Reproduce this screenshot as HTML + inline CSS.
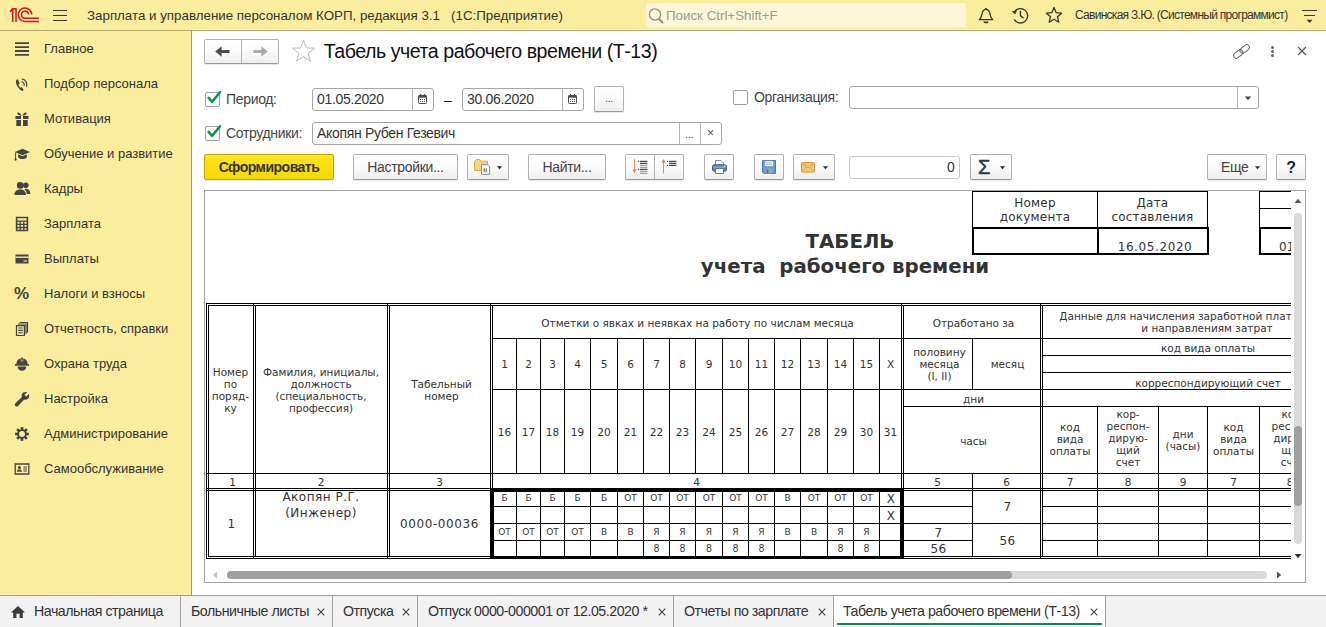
<!DOCTYPE html>
<html lang="ru"><head><meta charset="utf-8"><title>Табель учета рабочего времени (Т-13)</title>
<style>
*{box-sizing:border-box;margin:0;padding:0}
html,body{width:1326px;height:627px;overflow:hidden;background:#fff}
body{position:relative;font-family:"Liberation Sans",Arial,sans-serif;font-size:13.33px;color:#333;-webkit-font-smoothing:antialiased}
.abs{position:absolute}
.t{position:absolute;white-space:pre;line-height:1}
#topbar{position:absolute;left:0;top:0;width:1326px;height:30px;background:#fbed9e}
#topline{position:absolute;left:0;top:30px;width:1326px;height:1px;background:#b3a872}
#side{position:absolute;left:0;top:31px;width:191px;height:564px;background:#fbed9e}
#sideline{position:absolute;left:191px;top:31px;width:1px;height:564px;background:#a79c64}
.si{position:absolute;left:44px;font-size:13px;color:#333;white-space:pre;line-height:15px}
#tabbar{position:absolute;left:0;top:595px;width:1326px;height:32px;background:#f2f2f2;border-top:1px solid #9e9e9e}
.tab{position:absolute;top:596px;height:31px;font-size:14.2px;letter-spacing:-0.47px;color:#333;white-space:pre;line-height:31px}
.tsep{position:absolute;top:596px;width:1px;height:31px;background:#a3a3a3}
.btn{position:absolute;border:1px solid #b2b2b2;border-bottom-color:#9a9a9a;border-radius:2px;background:linear-gradient(#ffffff 0%,#fbfbfb 50%,#eeeeee 100%);box-shadow:0 1px 1px rgba(0,0,0,.10);font-size:14px;letter-spacing:-0.33px;color:#444;text-align:center;white-space:pre}
.inp{position:absolute;border:1px solid #a6a6a6;border-radius:3px;background:#fff}
.vsep{position:absolute;width:1px;background:#b4b4b4}
.cb{position:absolute;width:15px;height:15px;border:1px solid #a0a0a0;border-radius:2px;background:#fff}
.lbl{position:absolute;font-size:14px;letter-spacing:-0.33px;color:#444;white-space:pre;line-height:15px}
.sheet{position:absolute;left:205px;top:191px;width:1086px;height:368px;overflow:hidden;font-family:"DejaVu Sans",Verdana,sans-serif;color:#222}
.ln{position:absolute;background:#000}
.c{position:absolute;display:flex;align-items:center;justify-content:center;text-align:center;font-size:10.5px;line-height:12px;color:#333;white-space:pre}
</style></head>
<body>
<div id="topbar"></div><div id="topline"></div>
<svg class="abs" style="left:9px;top:7px" width="32" height="16" viewBox="0 0 32 16">
<g fill="none" stroke="#d8141c" stroke-width="1.5">
<path d="M3.7 15 V1.7 H7 V15"/><path d="M3.9 2 L1 4.6" stroke-width="1.8"/>
<path d="M19.5 7.5 A3.5 3.5 0 1 0 16 11.2 H30"/>
<path d="M22.7 7.5 A6.7 6.7 0 1 0 16 14.4 H30"/>
</g></svg>
<div class="abs" style="left:53px;top:10px;width:14px;height:1.4px;background:#3a3a3a"></div>
<div class="abs" style="left:53px;top:15px;width:14px;height:1.4px;background:#3a3a3a"></div>
<div class="abs" style="left:53px;top:20px;width:14px;height:1.4px;background:#3a3a3a"></div>
<div class="t" style="left:87px;top:8px;font-size:13.33px;line-height:15px;color:#333">Зарплата и управление персоналом КОРП, редакция 3.1   (1С:Предприятие)</div>
<div class="abs" style="left:646px;top:3px;width:320px;height:24px;background:#fdf6d7;border-radius:2px"></div>
<svg class="abs" style="left:648px;top:7px" width="17" height="17" viewBox="0 0 17 17"><circle cx="7" cy="7.5" r="5.6" fill="none" stroke="#8c8c8c" stroke-width="1.3"/><path d="M11 12 L14.5 15.5" stroke="#8c8c8c" stroke-width="1.8" stroke-linecap="round"/></svg>
<div class="t" style="left:666px;top:8px;font-size:13.33px;line-height:15px;color:#9b9b9b">Поиск Ctrl+Shift+F</div>
<svg class="abs" style="left:977px;top:7px" width="18" height="18" viewBox="0 0 18 18"><path d="M2.3 12.7 H15.7 C13.9 11 13.4 9.4 12.9 6.6 C12.4 3.7 11 2.3 9 2.3 C7 2.3 5.6 3.7 5.1 6.6 C4.6 9.4 4.1 11 2.3 12.7 Z" fill="none" stroke="#333" stroke-width="1.3" stroke-linejoin="round"/><path d="M9 1.1 V2.4" stroke="#333" stroke-width="1.6"/><path d="M6 14.5 H12 C11.2 15.8 10.2 16.3 9 16.3 C7.8 16.3 6.8 15.8 6 14.5 Z" fill="#333"/></svg>
<svg class="abs" style="left:1011px;top:7px" width="19" height="18" viewBox="0 0 19 18"><path d="M3.6 4.6 A7.2 7.2 0 1 1 3.2 12.4" fill="none" stroke="#333" stroke-width="1.3"/><path d="M0.9 4.2 L6 3.6 L4.1 7.6 Z" fill="#333"/><path d="M9.4 3.7 V8.6 L12.5 11.2" fill="none" stroke="#333" stroke-width="1.3"/></svg>
<svg class="abs" style="left:1045px;top:6px" width="18" height="18" viewBox="0 0 18 18"><path d="M9 1.6 L11.2 6.7 L16.6 7.2 L12.5 10.8 L13.8 16.2 L9 13.3 L4.2 16.2 L5.5 10.8 L1.4 7.2 L6.8 6.7 Z" fill="none" stroke="#333" stroke-width="1.3" stroke-linejoin="round"/></svg>
<div class="t" style="left:1075px;top:8px;font-size:12px;line-height:14px;color:#333;letter-spacing:-0.72px">Савинская З.Ю. (Системный программист)</div>
<div class="abs" style="left:1302px;top:10px;width:15px;height:1.4px;background:#3a3a3a"></div>
<div class="abs" style="left:1304px;top:15px;width:11px;height:1.4px;background:#3a3a3a"></div>
<svg class="abs" style="left:1305px;top:19px" width="9" height="5" viewBox="0 0 9 5"><path d="M1.5 0.8 H7.5 L4.5 4 Z" fill="#3a3a3a"/></svg>
<div id="side"></div><div id="sideline"></div>
<div class="si" style="top:41px">Главное</div>
<svg class="abs" style="left:14px;top:41px" width="17" height="16" viewBox="0 0 17 16"><path d="M1 2.2H15M1 6.1H15M1 10H15M1 13.9H15" stroke="#444" stroke-width="1.8"/></svg>
<div class="si" style="top:76px">Подбор персонала</div>
<svg class="abs" style="left:14px;top:76px" width="17" height="16" viewBox="0 0 17 16"><g transform="translate(-0.5 1.2)"><path d="M3.2 2.2 C2 3 2 5.5 3.6 8.6 C5.2 11.7 7.4 13.8 9 13.6 L10.3 12.7 L8.2 9.9 L7.1 10.5 C6.3 9.9 5.4 8.5 5 7.2 L6.2 6.4 L4.6 2.2 Z" fill="#444"/><path d="M8 4.3 A3.5 3.5 0 0 1 10.6 8.6" fill="none" stroke="#444" stroke-width="1.2"/><path d="M8.2 1.6 A6 6 0 0 1 13 9.6" fill="none" stroke="#444" stroke-width="1.2"/></g></svg>
<div class="si" style="top:111px">Мотивация</div>
<svg class="abs" style="left:14px;top:111px" width="17" height="16" viewBox="0 0 17 16"><path d="M1.5 5H7V8H1.5ZM9 5H14.5V8H9ZM2.3 9H7V15H2.3ZM9 9H13.7V15H9Z" fill="#444"/><path d="M4.3 1.6C5.8 1.6 7 3.2 7.6 4.6C6 4.6 3.6 4.2 3.4 2.8C3.3 2.1 3.7 1.6 4.3 1.6ZM11.7 1.6C10.2 1.6 9 3.2 8.4 4.6C10 4.6 12.4 4.2 12.6 2.8C12.7 2.1 12.3 1.6 11.7 1.6Z" fill="#444"/></svg>
<div class="si" style="top:146px">Обучение и развитие</div>
<svg class="abs" style="left:14px;top:146px" width="17" height="16" viewBox="0 0 17 16"><path d="M0.8 6 L8.5 2.8 L16 6 L8.5 9.2 Z" fill="#444"/><path d="M4.2 8.2 V11.6 C6.5 13.6 10.5 13.6 12.8 11.6 V8.2 L8.5 10.2 Z" fill="#444"/><path d="M1.6 6.4 V13" stroke="#444" stroke-width="1"/><circle cx="1.6" cy="13.6" r="1.1" fill="#444"/></svg>
<div class="si" style="top:181px">Кадры</div>
<svg class="abs" style="left:14px;top:181px" width="17" height="16" viewBox="0 0 17 16"><circle cx="6.2" cy="4.4" r="3.3" fill="#444"/><path d="M0.4 14 C0.4 10.2 2.8 8.4 6.2 8.4 C9.6 8.4 12 10.2 12 14 Z" fill="#444"/><circle cx="11.8" cy="4.2" r="2.8" fill="#444"/><path d="M11.6 7.8 C14.6 7.8 16.4 9.6 16.4 13 H12.8 C12.6 11 11.8 9.4 10.4 8.2 Z" fill="#444"/></svg>
<div class="si" style="top:216px">Зарплата</div>
<svg class="abs" style="left:14px;top:216px" width="17" height="16" viewBox="0 0 17 16"><path d="M2.6 1.5H13.4V14.5H2.6Z" fill="none" stroke="#444" stroke-width="1.6"/><path d="M2.6 5.2H13.4M2.6 8.4H13.4M2.6 11.5H13.4M6.2 5.2V14.5M9.8 5.2V14.5" stroke="#444" stroke-width="1.3"/></svg>
<div class="si" style="top:251px">Выплаты</div>
<svg class="abs" style="left:14px;top:251px" width="17" height="16" viewBox="0 0 17 16"><path d="M1.5 3.5H14.5V12.5H1.5Z" fill="#444"/><path d="M1.5 6.2H14.5" stroke="#fbed9e" stroke-width="1.4"/><path d="M9.5 10H13" stroke="#fbed9e" stroke-width="1.2"/></svg>
<div class="si" style="top:286px">Налоги и взносы</div>
<div class="t" style="left:14px;top:286px;font-size:17px;font-weight:bold;color:#444;line-height:16px">%</div>
<div class="si" style="top:321px">Отчетность, справки</div>
<svg class="abs" style="left:14px;top:321px" width="17" height="16" viewBox="0 0 17 16"><path d="M5.5 1.5H13.5V11.5" fill="none" stroke="#444" stroke-width="1.2"/><path d="M4 3H12V13" fill="none" stroke="#444" stroke-width="1.2"/><path d="M2.5 4.6H10.4V14.5H2.5Z" fill="#fbed9e" stroke="#444" stroke-width="1.2"/><path d="M4.2 7H8.8M4.2 9.4H8.8M4.2 11.8H8.8" stroke="#444" stroke-width="1.1"/></svg>
<div class="si" style="top:356px">Охрана труда</div>
<svg class="abs" style="left:14px;top:356px" width="17" height="16" viewBox="0 0 17 16"><path d="M2.4 8 C2.4 4.4 4.8 2.2 8 2.2 C11.2 2.2 13.6 4.4 13.6 8 Z" fill="#444"/><path d="M1 8.9 H15" stroke="#444" stroke-width="1.7"/><path d="M3.6 10.4 C3.8 13 5.6 14.8 8 14.8 C10.4 14.8 12.2 13 12.4 10.4 Z" fill="#444"/><path d="M7 1.2 H9 V5 H7 Z" fill="#444" stroke="#fbed9e" stroke-width="0.5"/></svg>
<div class="si" style="top:391px">Настройка</div>
<svg class="abs" style="left:14px;top:391px" width="17" height="16" viewBox="0 0 17 16"><path d="M14.8 3 L12.2 5.6 L10.4 3.8 L13 1.2 C11 0.4 8.8 1.1 7.9 3.1 C7.5 4.1 7.5 5.2 7.9 6.1 L1.4 12.2 C0.6 13 0.6 14.2 1.4 14.9 C2.2 15.7 3.3 15.7 4.1 14.9 L10.2 8.4 C11.2 8.8 12.3 8.7 13.3 8.2 C15.1 7.2 15.7 5 14.8 3 Z" fill="#444"/></svg>
<div class="si" style="top:426px">Администрирование</div>
<svg class="abs" style="left:14px;top:426px" width="17" height="16" viewBox="0 0 17 16"><g transform="translate(8 8)"><g fill="#444"><rect x="-1.3" y="-6.9" width="2.6" height="3.6" transform="rotate(0)"/><rect x="-1.3" y="-6.9" width="2.6" height="3.6" transform="rotate(45)"/><rect x="-1.3" y="-6.9" width="2.6" height="3.6" transform="rotate(90)"/><rect x="-1.3" y="-6.9" width="2.6" height="3.6" transform="rotate(135)"/><rect x="-1.3" y="-6.9" width="2.6" height="3.6" transform="rotate(180)"/><rect x="-1.3" y="-6.9" width="2.6" height="3.6" transform="rotate(225)"/><rect x="-1.3" y="-6.9" width="2.6" height="3.6" transform="rotate(270)"/><rect x="-1.3" y="-6.9" width="2.6" height="3.6" transform="rotate(315)"/></g><circle r="3.9" fill="none" stroke="#444" stroke-width="1.9"/></g></svg>
<div class="si" style="top:461px">Самообслуживание</div>
<svg class="abs" style="left:14px;top:461px" width="17" height="16" viewBox="0 0 17 16"><path d="M1.2 3H14.8V13H1.2Z" fill="none" stroke="#444" stroke-width="1.3"/><circle cx="5.4" cy="6.6" r="1.5" fill="#444"/><path d="M2.8 10.8 C2.8 9.2 4 8.6 5.4 8.6 C6.8 8.6 8 9.2 8 10.8 Z" fill="#444"/><path d="M9.4 6H13M9.4 8H13M9.4 10H13" stroke="#444" stroke-width="1"/></svg>
<div id="tabbar"></div>
<svg class="abs" style="left:10px;top:605px" width="16" height="14" viewBox="0 0 16 14"><path d="M8 1 L15 7.4 H12.8 V13 H9.6 V8.8 H6.4 V13 H3.2 V7.4 H1 Z" fill="#3b3b3b"/></svg>
<div class="tab" style="left:34px">Начальная страница</div>
<div class="tsep" style="left:180px"></div>
<div class="tab" style="left:191px">Больничные листы</div>
<svg class="abs" style="left:317px;top:608px" width="8" height="8" viewBox="0 0 8 8"><path d="M0.7 0.7 L7.3 7.3 M7.3 0.7 L0.7 7.3" stroke="#444" stroke-width="1.15"/></svg>
<div class="tsep" style="left:332px"></div>
<div class="tab" style="left:343px">Отпуска</div>
<svg class="abs" style="left:402px;top:608px" width="8" height="8" viewBox="0 0 8 8"><path d="M0.7 0.7 L7.3 7.3 M7.3 0.7 L0.7 7.3" stroke="#444" stroke-width="1.15"/></svg>
<div class="tsep" style="left:417px"></div>
<div class="tab" style="left:428px">Отпуск 0000-000001 от 12.05.2020 *</div>
<svg class="abs" style="left:658px;top:608px" width="8" height="8" viewBox="0 0 8 8"><path d="M0.7 0.7 L7.3 7.3 M7.3 0.7 L0.7 7.3" stroke="#444" stroke-width="1.15"/></svg>
<div class="tsep" style="left:673px"></div>
<div class="tab" style="left:684px">Отчеты по зарплате</div>
<svg class="abs" style="left:818px;top:608px" width="8" height="8" viewBox="0 0 8 8"><path d="M0.7 0.7 L7.3 7.3 M7.3 0.7 L0.7 7.3" stroke="#444" stroke-width="1.15"/></svg>
<div class="abs" style="left:834px;top:596px;width:271px;height:31px;background:#fff"></div>
<div class="abs" style="left:837px;top:623px;width:265px;height:2px;background:#0c8f45"></div>
<div class="tsep" style="left:833px"></div>
<div class="tab" style="left:843px">Табель учета рабочего времени (Т-13)</div>
<svg class="abs" style="left:1090px;top:608px" width="8" height="8" viewBox="0 0 8 8"><path d="M0.7 0.7 L7.3 7.3 M7.3 0.7 L0.7 7.3" stroke="#444" stroke-width="1.15"/></svg>
<div class="tsep" style="left:1105px"></div>
<div class="btn" style="left:204px;top:39px;width:75px;height:25px"></div>
<div class="vsep" style="left:241px;top:40px;height:23px"></div>
<svg class="abs" style="left:214px;top:45px" width="18" height="13" viewBox="0 0 18 13"><path d="M15.5 6.5 H5" stroke="#4d4d4d" stroke-width="3"/><path d="M1.2 6.5 L7.6 1.2 V11.8 Z" fill="#4d4d4d"/></svg>
<svg class="abs" style="left:251px;top:45px" width="18" height="13" viewBox="0 0 18 13"><path d="M2.5 6.5 H13" stroke="#aaaaaa" stroke-width="3"/><path d="M16.8 6.5 L10.4 1.2 V11.8 Z" fill="#aaaaaa"/></svg>
<svg class="abs" style="left:291px;top:39px" width="25" height="24" viewBox="0 0 25 24"><path d="M12.5 1.4 L15.3 8.9 L23.6 9.2 L17.1 14.3 L19.4 22.2 L12.5 17.6 L5.6 22.2 L7.9 14.3 L1.4 9.2 L9.7 8.9 Z" fill="#fff" stroke="#a9b3bd" stroke-width="0.9" stroke-linejoin="miter"/></svg>
<div class="t" style="left:323.7px;top:41px;font-size:19.6px;letter-spacing:-0.47px;line-height:21px;color:#111">Табель учета рабочего времени (Т-13)</div>
<svg class="abs" style="left:1232px;top:43px" width="19" height="17" viewBox="0 0 19 17"><g fill="none" stroke="#666" stroke-width="1" transform="rotate(-38 9.5 8.5)"><rect x="0.2" y="5.8" width="10.4" height="5.4" rx="2.7"/><rect x="8.4" y="5.8" width="10.4" height="5.4" rx="2.7"/></g></svg>
<div class="abs" style="left:1271px;top:46px;width:3px;height:3px;border-radius:1.5px;background:#666"></div>
<div class="abs" style="left:1271px;top:50px;width:3px;height:3px;border-radius:1.5px;background:#666"></div>
<div class="abs" style="left:1271px;top:54px;width:3px;height:3px;border-radius:1.5px;background:#666"></div>
<svg class="abs" style="left:1297px;top:46px" width="10" height="10" viewBox="0 0 10 10"><path d="M1 1 L9 9 M9 1 L1 9" stroke="#555" stroke-width="1.15"/></svg>
<div class="cb" style="left:205px;top:92px"></div>
<svg class="abs" style="left:204px;top:89px" width="19" height="17" viewBox="0 0 19 17"><path d="M4.6 8.9 L8.1 12.9 L16 3.2" fill="none" stroke="#0a9446" stroke-width="2.5" stroke-linecap="round" stroke-linejoin="round"/></svg>
<div class="lbl" style="left:226px;top:92px">Период:</div>
<div class="inp" style="left:312px;top:88px;width:122px;height:23px"></div>
<div class="vsep" style="left:412px;top:89px;height:21px"></div>
<div class="lbl" style="left:317px;top:91px;color:#333;font-size:14px;letter-spacing:-0.33px;line-height:16px">01.05.2020</div>
<svg class="abs" style="left:418px;top:94px" width="9" height="10" viewBox="0 0 9 10"><rect x="0.5" y="1.5" width="8" height="8" rx="0.8" fill="#fff" stroke="#4a4a4a" stroke-width="1"/><rect x="0.5" y="1.5" width="8" height="2.2" fill="#4a4a4a"/><rect x="1.9" y="0" width="1.3" height="2" fill="#4a4a4a"/><rect x="5.8" y="0" width="1.3" height="2" fill="#4a4a4a"/><g fill="#4a4a4a"><rect x="2" y="5" width="1" height="1"/><rect x="4" y="5" width="1" height="1"/><rect x="6" y="5" width="1" height="1"/><rect x="2" y="7" width="1" height="1"/><rect x="4" y="7" width="1" height="1"/><rect x="6" y="7" width="1" height="1"/></g></svg>
<div class="lbl" style="left:444px;top:93px;color:#222">–</div>
<div class="inp" style="left:462px;top:88px;width:122px;height:23px"></div>
<div class="vsep" style="left:562px;top:89px;height:21px"></div>
<div class="lbl" style="left:467px;top:91px;color:#333;font-size:14px;letter-spacing:-0.33px;line-height:16px">30.06.2020</div>
<svg class="abs" style="left:568px;top:94px" width="9" height="10" viewBox="0 0 9 10"><rect x="0.5" y="1.5" width="8" height="8" rx="0.8" fill="#fff" stroke="#4a4a4a" stroke-width="1"/><rect x="0.5" y="1.5" width="8" height="2.2" fill="#4a4a4a"/><rect x="1.9" y="0" width="1.3" height="2" fill="#4a4a4a"/><rect x="5.8" y="0" width="1.3" height="2" fill="#4a4a4a"/><g fill="#4a4a4a"><rect x="2" y="5" width="1" height="1"/><rect x="4" y="5" width="1" height="1"/><rect x="6" y="5" width="1" height="1"/><rect x="2" y="7" width="1" height="1"/><rect x="4" y="7" width="1" height="1"/><rect x="6" y="7" width="1" height="1"/></g></svg>
<div class="btn" style="left:594px;top:86px;width:30px;height:26px;line-height:23px;font-size:11px">...</div>
<div class="cb" style="left:733px;top:90px"></div>
<div class="lbl" style="left:754px;top:90px">Организация:</div>
<div class="inp" style="left:849px;top:86px;width:410px;height:23px"></div>
<div class="vsep" style="left:1237px;top:87px;height:21px"></div>
<svg class="abs" style="left:1244px;top:96px" width="8" height="5" viewBox="0 0 8 5"><path d="M0.8 0.6 H7.2 L4 4.2 Z" fill="#444"/></svg>
<div class="cb" style="left:205px;top:126px"></div>
<svg class="abs" style="left:204px;top:123px" width="19" height="17" viewBox="0 0 19 17"><path d="M4.6 8.9 L8.1 12.9 L16 3.2" fill="none" stroke="#0a9446" stroke-width="2.5" stroke-linecap="round" stroke-linejoin="round"/></svg>
<div class="lbl" style="left:226px;top:126px">Сотрудники:</div>
<div class="inp" style="left:312px;top:122px;width:410px;height:23px"></div>
<div class="vsep" style="left:679px;top:123px;height:21px"></div>
<div class="vsep" style="left:700px;top:123px;height:21px"></div>
<div class="lbl" style="left:317px;top:126px;color:#333">Акопян Рубен Гезевич</div>
<div class="lbl" style="left:685px;top:127px;font-size:11px;color:#444">...</div>
<div class="lbl" style="left:707px;top:126px;font-size:12px;color:#555">×</div>
<div class="btn" style="left:204px;top:154px;width:130px;height:26px;line-height:25px;font-weight:bold;letter-spacing:-0.5px;color:#333;background:linear-gradient(#ffe620,#f8d800);border-color:#c4a300">Сформировать</div>
<div class="btn" style="left:353px;top:154px;width:105px;height:26px;line-height:25px">Настройки...</div>
<div class="btn" style="left:467px;top:154px;width:42px;height:26px"></div>
<div class="btn" style="left:528px;top:154px;width:78px;height:26px;line-height:25px">Найти...</div>
<div class="btn" style="left:625px;top:154px;width:59px;height:26px"></div>
<div class="vsep" style="left:654px;top:155px;height:24px"></div>
<div class="btn" style="left:704px;top:154px;width:30px;height:26px"></div>
<div class="btn" style="left:754px;top:154px;width:30px;height:26px"></div>
<div class="btn" style="left:793px;top:154px;width:42px;height:26px"></div>
<div class="inp" style="left:849px;top:156px;width:111px;height:23px;border-color:#c8c8c8"></div>
<div class="lbl" style="left:947px;top:160px;color:#333">0</div>
<div class="btn" style="left:970px;top:154px;width:42px;height:26px"></div>
<div class="btn" style="left:1207px;top:154px;width:60px;height:26px;line-height:25px;text-align:left;padding-left:13px">Еще</div>
<div class="btn" style="left:1276px;top:154px;width:30px;height:26px;line-height:25px;font-weight:bold;color:#222;font-size:16px">?</div>
<svg class="abs" style="left:496px;top:166px" width="7" height="4" viewBox="0 0 7 4"><path d="M0.8 0.2 H6.2 L3.5 3.2 Z" fill="#333"/></svg>
<svg class="abs" style="left:822px;top:166px" width="7" height="4" viewBox="0 0 7 4"><path d="M0.8 0.2 H6.2 L3.5 3.2 Z" fill="#333"/></svg>
<svg class="abs" style="left:999px;top:166px" width="7" height="4" viewBox="0 0 7 4"><path d="M0.8 0.2 H6.2 L3.5 3.2 Z" fill="#333"/></svg>
<svg class="abs" style="left:1254px;top:166px" width="7" height="4" viewBox="0 0 7 4"><path d="M0.8 0.2 H6.2 L3.5 3.2 Z" fill="#333"/></svg>
<svg class="abs" style="left:473px;top:158px" width="20" height="19" viewBox="0 0 20 19"><path d="M1.6 3.4 L3.4 1.5 H6.6 L8.2 3.2 H14.4 V12.4 H1.6 Z" fill="#f6d57f" stroke="#d9a53a" stroke-width="1" stroke-linejoin="round"/><path d="M8.5 6.7 H14.4 L16.6 8.9 V16.3 H8.5 Z" fill="#fff" stroke="#7b8da0" stroke-width="1" stroke-linejoin="round"/><path d="M11.2 13.4V10.2" stroke="#e8383a" stroke-width="1.3"/><path d="M13.3 13.4V10.2" stroke="#2fa84c" stroke-width="1.3"/><path d="M10.2 13.8H14.6" stroke="#9a9a9a" stroke-width="0.7"/></svg>
<svg class="abs" style="left:632px;top:158px" width="18" height="18" viewBox="0 0 18 18"><path d="M2.5 1V14" stroke="#ee8b55" stroke-width="1.1"/><path d="M0.6 11.6 H4.4 L2.5 15.2 Z" fill="#ee7a3c"/><rect x="8" y="2.8" width="7.4" height="1" fill="#222"/><rect x="8" y="4.8" width="7.4" height="1" fill="#222"/><rect x="8" y="6.8" width="7.4" height="1" fill="#8a8a8a"/><rect x="8" y="8.8" width="7.4" height="1" fill="#8a8a8a"/><rect x="8" y="10.8" width="7.4" height="1" fill="#222"/><rect x="8" y="12.8" width="7.4" height="1" fill="#8a8a8a"/><rect x="8" y="14.8" width="7.4" height="1" fill="#8a8a8a"/><rect x="6" y="2.8" width="1.1" height="1" fill="#222"/><rect x="6" y="10.8" width="1.1" height="1" fill="#222"/></svg>
<svg class="abs" style="left:661px;top:158px" width="18" height="18" viewBox="0 0 18 18"><path d="M2.5 2.5V15.5" stroke="#ee8b55" stroke-width="1.1"/><path d="M0.6 4.6 H4.4 L2.5 1 Z" fill="#ee7a3c"/><rect x="8" y="2.8" width="7.4" height="1" fill="#222"/><rect x="8" y="4.8" width="7.4" height="1" fill="#222"/><rect x="8" y="6.8" width="7.4" height="1" fill="#222"/><rect x="6" y="2.8" width="1.1" height="1" fill="#222"/><rect x="6" y="6.8" width="1.1" height="1" fill="#222"/></svg>
<svg class="abs" style="left:711px;top:159px" width="17" height="16" viewBox="0 0 17 16"><path d="M4.5 6V1.5H10L12.5 4V6" fill="#fff" stroke="#7d8fa6" stroke-width="1"/><rect x="1.5" y="5.8" width="14" height="6.4" rx="1.6" fill="#5f84b0" stroke="#3d5f8c" stroke-width="1"/><path d="M2.5 8.2H14.5" stroke="#9db6d4" stroke-width="1"/><path d="M4.5 9.5H12.5V14.5H4.5Z" fill="#fff" stroke="#5a7597" stroke-width="1"/><circle cx="13.3" cy="7.2" r="0.7" fill="#fff"/></svg>
<svg class="abs" style="left:762px;top:160px" width="14" height="14" viewBox="0 0 14 14"><path d="M0.5 0.5H13.5V13.5H2L0.5 12Z" fill="#6d9cd3" stroke="#4a7ab5" stroke-width="1"/><rect x="2.6" y="0.9" width="8.8" height="5.6" fill="#f1f5fb" stroke="#5a86bd" stroke-width="0.5"/><path d="M4 2.8H10M4 4.6H10" stroke="#9bb4d3" stroke-width="0.8"/><rect x="3.6" y="8.6" width="6.8" height="4.9" fill="#9aa6b5"/><rect x="4.6" y="9.6" width="1.8" height="3" fill="#3d66a0"/></svg>
<svg class="abs" style="left:801px;top:162px" width="14" height="11" viewBox="0 0 14 11"><rect x="0.5" y="0.5" width="13" height="9.6" rx="1" fill="#f3c777" stroke="#cf9a3c" stroke-width="1"/><path d="M0.9 0.9 L7 6 L13.1 0.9" fill="none" stroke="#cf9a3c" stroke-width="0.9"/><path d="M0.9 9.8 L5.2 4.7M13.1 9.8 L8.8 4.7" stroke="#dfae56" stroke-width="0.7"/></svg>
<div class="t" style="left:978px;top:156px;font-size:20px;line-height:22px;color:#2b3846;-webkit-text-stroke:0.5px #2b3846">Σ</div>
<div class="abs" style="left:204px;top:190px;width:1102px;height:393px;border:1px solid #a3a3a3;background:#fff"></div>
<div class="sheet"><div class="ln" style="left:767px;top:0px;width:236px;height:1px"></div><div class="ln" style="left:767px;top:0px;width:1px;height:37px"></div><div class="ln" style="left:892px;top:0px;width:1px;height:37px"></div><div class="ln" style="left:1002px;top:0px;width:1px;height:37px"></div><div class="ln" style="left:767px;top:36px;width:237px;height:2px"></div><div class="ln" style="left:767px;top:62px;width:237px;height:2px"></div><div class="ln" style="left:767px;top:36px;width:2px;height:28px"></div><div class="ln" style="left:892px;top:36px;width:2px;height:28px"></div><div class="ln" style="left:1002px;top:36px;width:2px;height:28px"></div><div class="c" style="left:768px;top:1px;width:124px;height:35px;font-size:12px;line-height:14px;letter-spacing:0.2px;">Номер
документа</div><div class="c" style="left:893px;top:1px;width:109px;height:35px;font-size:12px;line-height:14px;letter-spacing:0.2px;">Дата
составления</div><div class="c" style="left:896px;top:39px;width:108px;height:24px;font-size:12px;line-height:14px;letter-spacing:0.2px;align-items:flex-end;letter-spacing:0.6px;">16.05.2020</div><div class="ln" style="left:1054px;top:0px;width:1px;height:37px"></div><div class="ln" style="left:1054px;top:0px;width:42px;height:1px"></div><div class="ln" style="left:1054px;top:17px;width:42px;height:1px"></div><div class="ln" style="left:1054px;top:36px;width:42px;height:2px"></div><div class="ln" style="left:1054px;top:62px;width:42px;height:2px"></div><div class="ln" style="left:1054px;top:36px;width:2px;height:28px"></div><div class="c" style="left:1074px;top:39px;width:80px;height:24px;justify-content:flex-start;align-items:flex-end;font-size:12px;line-height:14px;letter-spacing:0.2px;">01.05.2020</div><div class="c" style="left:445px;top:39px;width:400px;height:24px;font-weight:bold;font-size:19.8px;line-height:24px;color:#333;">ТАБЕЛЬ</div><div class="c" style="left:440px;top:64px;width:400px;height:24px;font-weight:bold;font-size:19.8px;line-height:24px;color:#333;">учета  рабочего времени</div><div class="ln" style="left:1px;top:112px;width:1px;height:256px"></div><div class="ln" style="left:3px;top:114px;width:1px;height:252px"></div><div class="ln" style="left:48px;top:112px;width:1px;height:256px"></div><div class="ln" style="left:50px;top:114px;width:1px;height:252px"></div><div class="ln" style="left:182px;top:112px;width:1px;height:256px"></div><div class="ln" style="left:184px;top:114px;width:1px;height:252px"></div><div class="ln" style="left:285px;top:112px;width:1px;height:256px"></div><div class="ln" style="left:287px;top:114px;width:1px;height:252px"></div><div class="ln" style="left:696px;top:112px;width:1px;height:256px"></div><div class="ln" style="left:698px;top:114px;width:1px;height:252px"></div><div class="ln" style="left:835px;top:112px;width:1px;height:256px"></div><div class="ln" style="left:837px;top:114px;width:1px;height:252px"></div><div class="ln" style="left:1px;top:112px;width:1195px;height:1px"></div><div class="ln" style="left:3px;top:114px;width:1193px;height:1px"></div><div class="ln" style="left:1px;top:297px;width:1195px;height:1px"></div><div class="ln" style="left:1px;top:299px;width:1195px;height:1px"></div><div class="ln" style="left:3px;top:365px;width:1193px;height:1px"></div><div class="ln" style="left:1px;top:367px;width:1195px;height:1px"></div><div class="ln" style="left:287px;top:147px;width:909px;height:1px"></div><div class="ln" style="left:287px;top:198px;width:909px;height:1px"></div><div class="ln" style="left:837px;top:164px;width:359px;height:1px"></div><div class="ln" style="left:837px;top:181px;width:359px;height:1px"></div><div class="ln" style="left:698px;top:215px;width:498px;height:1px"></div><div class="ln" style="left:1px;top:282px;width:1195px;height:1px"></div><div class="ln" style="left:311px;top:147px;width:1px;height:136px"></div><div class="ln" style="left:311px;top:299px;width:1px;height:67px"></div><div class="ln" style="left:335px;top:147px;width:1px;height:136px"></div><div class="ln" style="left:335px;top:299px;width:1px;height:67px"></div><div class="ln" style="left:359px;top:147px;width:1px;height:136px"></div><div class="ln" style="left:359px;top:299px;width:1px;height:67px"></div><div class="ln" style="left:385px;top:147px;width:1px;height:136px"></div><div class="ln" style="left:385px;top:299px;width:1px;height:67px"></div><div class="ln" style="left:412px;top:147px;width:1px;height:136px"></div><div class="ln" style="left:412px;top:299px;width:1px;height:67px"></div><div class="ln" style="left:438px;top:147px;width:1px;height:136px"></div><div class="ln" style="left:438px;top:299px;width:1px;height:67px"></div><div class="ln" style="left:464px;top:147px;width:1px;height:136px"></div><div class="ln" style="left:464px;top:299px;width:1px;height:67px"></div><div class="ln" style="left:490px;top:147px;width:1px;height:136px"></div><div class="ln" style="left:490px;top:299px;width:1px;height:67px"></div><div class="ln" style="left:517px;top:147px;width:1px;height:136px"></div><div class="ln" style="left:517px;top:299px;width:1px;height:67px"></div><div class="ln" style="left:543px;top:147px;width:1px;height:136px"></div><div class="ln" style="left:543px;top:299px;width:1px;height:67px"></div><div class="ln" style="left:569px;top:147px;width:1px;height:136px"></div><div class="ln" style="left:569px;top:299px;width:1px;height:67px"></div><div class="ln" style="left:595px;top:147px;width:1px;height:136px"></div><div class="ln" style="left:595px;top:299px;width:1px;height:67px"></div><div class="ln" style="left:622px;top:147px;width:1px;height:136px"></div><div class="ln" style="left:622px;top:299px;width:1px;height:67px"></div><div class="ln" style="left:648px;top:147px;width:1px;height:136px"></div><div class="ln" style="left:648px;top:299px;width:1px;height:67px"></div><div class="ln" style="left:674px;top:147px;width:1px;height:136px"></div><div class="ln" style="left:674px;top:299px;width:1px;height:67px"></div><div class="ln" style="left:767px;top:147px;width:1px;height:52px"></div><div class="ln" style="left:767px;top:282px;width:1px;height:84px"></div><div class="ln" style="left:892px;top:215px;width:1px;height:151px"></div><div class="ln" style="left:953px;top:215px;width:1px;height:151px"></div><div class="ln" style="left:1002px;top:215px;width:1px;height:151px"></div><div class="ln" style="left:1054px;top:215px;width:1px;height:151px"></div><div class="ln" style="left:1115px;top:215px;width:1px;height:151px"></div><div class="ln" style="left:287px;top:315px;width:481px;height:1px"></div><div class="ln" style="left:837px;top:315px;width:359px;height:1px"></div><div class="ln" style="left:287px;top:332px;width:481px;height:1px"></div><div class="ln" style="left:837px;top:332px;width:359px;height:1px"></div><div class="ln" style="left:287px;top:349px;width:481px;height:1px"></div><div class="ln" style="left:837px;top:349px;width:359px;height:1px"></div><div class="ln" style="left:767px;top:332px;width:69px;height:1px"></div><div class="ln" style="left:285px;top:298px;width:414px;height:3px"></div><div class="ln" style="left:285px;top:365px;width:414px;height:3px"></div><div class="ln" style="left:286px;top:297px;width:3px;height:71px"></div><div class="ln" style="left:695px;top:297px;width:3px;height:71px"></div><div class="c" style="left:3px;top:115px;width:45px;height:168px;">Номер
по
поряд-
ку</div><div class="c" style="left:50px;top:115px;width:132px;height:168px;">Фамилия, инициалы,
должность
(специальность,
профессия)</div><div class="c" style="left:186px;top:115px;width:101px;height:168px;">Табельный
номер</div><div class="c" style="left:288px;top:115px;width:409px;height:33px;">Отметки о явках и неявках на работу по числам месяца</div><div class="c" style="left:288px;top:148px;width:23px;height:50px;">1</div><div class="c" style="left:288px;top:199px;width:23px;height:83px;">16</div><div class="c" style="left:312px;top:148px;width:23px;height:50px;">2</div><div class="c" style="left:312px;top:199px;width:23px;height:83px;">17</div><div class="c" style="left:336px;top:148px;width:23px;height:50px;">3</div><div class="c" style="left:336px;top:199px;width:23px;height:83px;">18</div><div class="c" style="left:360px;top:148px;width:25px;height:50px;">4</div><div class="c" style="left:360px;top:199px;width:25px;height:83px;">19</div><div class="c" style="left:386px;top:148px;width:26px;height:50px;">5</div><div class="c" style="left:386px;top:199px;width:26px;height:83px;">20</div><div class="c" style="left:413px;top:148px;width:25px;height:50px;">6</div><div class="c" style="left:413px;top:199px;width:25px;height:83px;">21</div><div class="c" style="left:439px;top:148px;width:25px;height:50px;">7</div><div class="c" style="left:439px;top:199px;width:25px;height:83px;">22</div><div class="c" style="left:465px;top:148px;width:25px;height:50px;">8</div><div class="c" style="left:465px;top:199px;width:25px;height:83px;">23</div><div class="c" style="left:491px;top:148px;width:26px;height:50px;">9</div><div class="c" style="left:491px;top:199px;width:26px;height:83px;">24</div><div class="c" style="left:518px;top:148px;width:25px;height:50px;">10</div><div class="c" style="left:518px;top:199px;width:25px;height:83px;">25</div><div class="c" style="left:544px;top:148px;width:25px;height:50px;">11</div><div class="c" style="left:544px;top:199px;width:25px;height:83px;">26</div><div class="c" style="left:570px;top:148px;width:25px;height:50px;">12</div><div class="c" style="left:570px;top:199px;width:25px;height:83px;">27</div><div class="c" style="left:596px;top:148px;width:26px;height:50px;">13</div><div class="c" style="left:596px;top:199px;width:26px;height:83px;">28</div><div class="c" style="left:623px;top:148px;width:25px;height:50px;">14</div><div class="c" style="left:623px;top:199px;width:25px;height:83px;">29</div><div class="c" style="left:649px;top:148px;width:25px;height:50px;">15</div><div class="c" style="left:649px;top:199px;width:25px;height:83px;">30</div><div class="c" style="left:675px;top:148px;width:21px;height:50px;">X</div><div class="c" style="left:675px;top:199px;width:21px;height:83px;">31</div><div class="c" style="left:700px;top:115px;width:137px;height:33px;">Отработано за</div><div class="c" style="left:700px;top:148px;width:69px;height:50px;">половину
месяца
(I, II)</div><div class="c" style="left:769px;top:148px;width:67px;height:50px;">месяц</div><div class="c" style="left:700px;top:200px;width:137px;height:16px;">дни</div><div class="c" style="left:700px;top:217px;width:137px;height:66px;">часы</div><div class="c" style="left:837px;top:115px;width:330px;height:32px">Данные для начисления заработной платы по видам
и направлениям затрат</div><div class="c" style="left:837px;top:149px;width:332px;height:16px">код вида оплаты</div><div class="c" style="left:837px;top:184px;width:332px;height:16px">корреспондирующий счет</div><div class="c" style="left:838px;top:215px;width:54px;height:66px;">код
вида
оплаты</div><div class="c" style="left:893px;top:214px;width:60px;height:66px;">кор-
респон-
дирую-
щий
счет</div><div class="c" style="left:954px;top:216px;width:48px;height:66px;">дни
(часы)</div><div class="c" style="left:1003px;top:215px;width:51px;height:66px;">код
вида
оплаты</div><div class="c" style="left:1058px;top:214px;width:60px;height:66px;">кор-
респон-
дирую-
щий
счет</div><div class="c" style="left:5px;top:284px;width:45px;height:14px;">1</div><div class="c" style="left:50px;top:284px;width:132px;height:14px;">2</div><div class="c" style="left:184px;top:284px;width:101px;height:14px;">3</div><div class="c" style="left:287px;top:284px;width:409px;height:14px;">4</div><div class="c" style="left:698px;top:284px;width:69px;height:14px;">5</div><div class="c" style="left:768px;top:284px;width:67px;height:14px;">6</div><div class="c" style="left:838px;top:284px;width:54px;height:14px;">7</div><div class="c" style="left:893px;top:284px;width:60px;height:14px;">8</div><div class="c" style="left:954px;top:284px;width:48px;height:14px;">9</div><div class="c" style="left:1003px;top:284px;width:51px;height:14px;">7</div><div class="c" style="left:1055px;top:284px;width:60px;height:14px;">8</div><div class="c" style="left:4px;top:300px;width:45px;height:66px;font-size:12px;line-height:15px;letter-spacing:0.3px;">1</div><div class="c" style="left:50px;top:299px;width:132px;height:65px;font-size:12px;line-height:15px;letter-spacing:0.3px;align-items:flex-start;line-height:15.5px;letter-spacing:0.5px;">Акопян Р.Г.
(Инженер)</div><div class="c" style="left:184px;top:300px;width:101px;height:66px;font-size:12px;line-height:15px;letter-spacing:0.3px;letter-spacing:0.6px;">0000-00036</div><div class="c" style="left:288px;top:299px;width:23px;height:16px;font-size:9px;line-height:10px;">Б</div><div class="c" style="left:288px;top:333px;width:23px;height:16px;font-size:9px;line-height:10px;">ОТ</div><div class="c" style="left:312px;top:299px;width:23px;height:16px;font-size:9px;line-height:10px;">Б</div><div class="c" style="left:312px;top:333px;width:23px;height:16px;font-size:9px;line-height:10px;">ОТ</div><div class="c" style="left:336px;top:299px;width:23px;height:16px;font-size:9px;line-height:10px;">Б</div><div class="c" style="left:336px;top:333px;width:23px;height:16px;font-size:9px;line-height:10px;">ОТ</div><div class="c" style="left:360px;top:299px;width:25px;height:16px;font-size:9px;line-height:10px;">Б</div><div class="c" style="left:360px;top:333px;width:25px;height:16px;font-size:9px;line-height:10px;">ОТ</div><div class="c" style="left:386px;top:299px;width:26px;height:16px;font-size:9px;line-height:10px;">Б</div><div class="c" style="left:386px;top:333px;width:26px;height:16px;font-size:9px;line-height:10px;">В</div><div class="c" style="left:413px;top:299px;width:25px;height:16px;font-size:9px;line-height:10px;">ОТ</div><div class="c" style="left:413px;top:333px;width:25px;height:16px;font-size:9px;line-height:10px;">В</div><div class="c" style="left:439px;top:299px;width:25px;height:16px;font-size:9px;line-height:10px;">ОТ</div><div class="c" style="left:439px;top:333px;width:25px;height:16px;font-size:9px;line-height:10px;">Я</div><div class="c" style="left:439px;top:350px;width:25px;height:15px;font-family:'Liberation Sans',Arial,sans-serif;font-size:10px;line-height:10px;">8</div><div class="c" style="left:465px;top:299px;width:25px;height:16px;font-size:9px;line-height:10px;">ОТ</div><div class="c" style="left:465px;top:333px;width:25px;height:16px;font-size:9px;line-height:10px;">Я</div><div class="c" style="left:465px;top:350px;width:25px;height:15px;font-family:'Liberation Sans',Arial,sans-serif;font-size:10px;line-height:10px;">8</div><div class="c" style="left:491px;top:299px;width:26px;height:16px;font-size:9px;line-height:10px;">ОТ</div><div class="c" style="left:491px;top:333px;width:26px;height:16px;font-size:9px;line-height:10px;">Я</div><div class="c" style="left:491px;top:350px;width:26px;height:15px;font-family:'Liberation Sans',Arial,sans-serif;font-size:10px;line-height:10px;">8</div><div class="c" style="left:518px;top:299px;width:25px;height:16px;font-size:9px;line-height:10px;">ОТ</div><div class="c" style="left:518px;top:333px;width:25px;height:16px;font-size:9px;line-height:10px;">Я</div><div class="c" style="left:518px;top:350px;width:25px;height:15px;font-family:'Liberation Sans',Arial,sans-serif;font-size:10px;line-height:10px;">8</div><div class="c" style="left:544px;top:299px;width:25px;height:16px;font-size:9px;line-height:10px;">ОТ</div><div class="c" style="left:544px;top:333px;width:25px;height:16px;font-size:9px;line-height:10px;">Я</div><div class="c" style="left:544px;top:350px;width:25px;height:15px;font-family:'Liberation Sans',Arial,sans-serif;font-size:10px;line-height:10px;">8</div><div class="c" style="left:570px;top:299px;width:25px;height:16px;font-size:9px;line-height:10px;">В</div><div class="c" style="left:570px;top:333px;width:25px;height:16px;font-size:9px;line-height:10px;">В</div><div class="c" style="left:596px;top:299px;width:26px;height:16px;font-size:9px;line-height:10px;">ОТ</div><div class="c" style="left:596px;top:333px;width:26px;height:16px;font-size:9px;line-height:10px;">В</div><div class="c" style="left:623px;top:299px;width:25px;height:16px;font-size:9px;line-height:10px;">ОТ</div><div class="c" style="left:623px;top:333px;width:25px;height:16px;font-size:9px;line-height:10px;">Я</div><div class="c" style="left:623px;top:350px;width:25px;height:15px;font-family:'Liberation Sans',Arial,sans-serif;font-size:10px;line-height:10px;">8</div><div class="c" style="left:649px;top:299px;width:25px;height:16px;font-size:9px;line-height:10px;">ОТ</div><div class="c" style="left:649px;top:333px;width:25px;height:16px;font-size:9px;line-height:10px;">Я</div><div class="c" style="left:649px;top:350px;width:25px;height:15px;font-family:'Liberation Sans',Arial,sans-serif;font-size:10px;line-height:10px;">8</div><div class="c" style="left:676px;top:301px;width:20px;height:15px;font-size:12px;line-height:15px;letter-spacing:0.3px;">X</div><div class="c" style="left:676px;top:317px;width:20px;height:16px;font-size:12px;line-height:15px;letter-spacing:0.3px;">X</div><div class="c" style="left:699px;top:334px;width:69px;height:16px;font-size:12px;line-height:15px;letter-spacing:0.3px;">7</div><div class="c" style="left:699px;top:351px;width:69px;height:15px;font-size:12px;line-height:15px;letter-spacing:0.3px;">56</div><div class="c" style="left:769px;top:300px;width:67px;height:32px;font-size:12px;line-height:15px;letter-spacing:0.3px;">7</div><div class="c" style="left:769px;top:334px;width:67px;height:32px;font-size:12px;line-height:15px;letter-spacing:0.3px;">56</div></div>
<svg class="abs" style="left:1294px;top:198px" width="8" height="6" viewBox="0 0 8 6"><path d="M0.6 5 H7.4 L4 0.8 Z" fill="#555"/></svg>
<div class="abs" style="left:1294px;top:213px;width:8px;height:331px;border-radius:4px;background:#d9d9d9"></div>
<div class="abs" style="left:1294px;top:426px;width:8px;height:80px;border-radius:4px;background:#a0a0a0"></div>
<svg class="abs" style="left:1294px;top:553px" width="8" height="6" viewBox="0 0 8 6"><path d="M0.6 1 H7.4 L4 5.2 Z" fill="#333"/></svg>
<svg class="abs" style="left:212px;top:571px" width="6" height="8" viewBox="0 0 6 8"><path d="M5 0.6 V7.4 L0.8 4 Z" fill="#c4c4c4"/></svg>
<div class="abs" style="left:227px;top:571px;width:1040px;height:8px;border-radius:4px;background:#d9d9d9"></div>
<div class="abs" style="left:227px;top:571px;width:785px;height:8px;border-radius:4px;background:#a0a0a0"></div>
<svg class="abs" style="left:1276px;top:571px" width="6" height="8" viewBox="0 0 6 8"><path d="M1 0.6 V7.4 L5.2 4 Z" fill="#555"/></svg>
</body></html>
